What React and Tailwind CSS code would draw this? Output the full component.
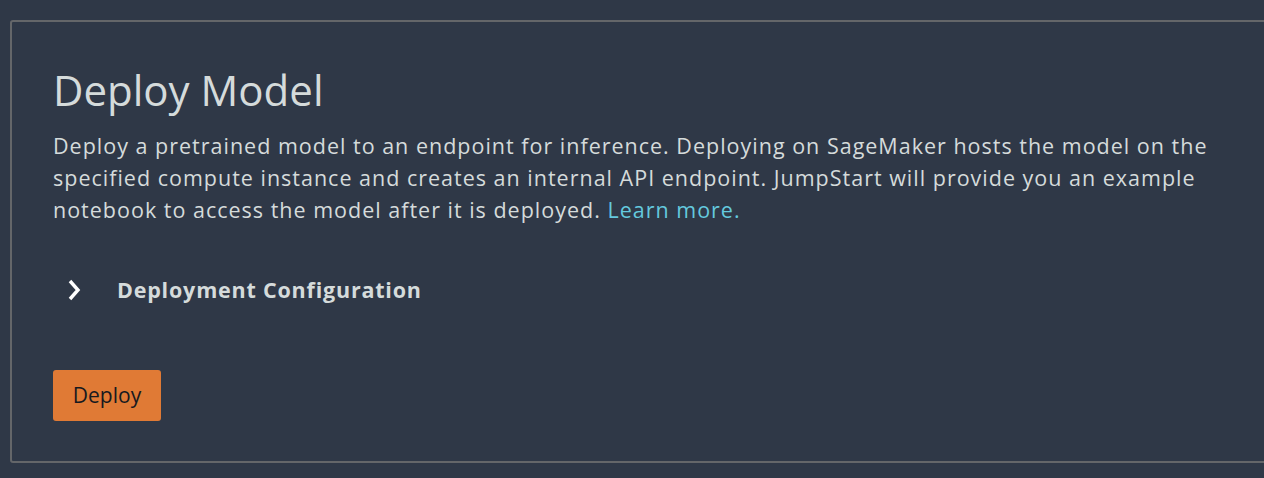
export default function App() {
  return (
    <div
      className="h-[478px] w-full overflow-hidden bg-[#2f3847] pt-[20px] pl-[10px]"
      style={{ fontFamily: '"Open Sans", "Noto Sans", sans-serif' }}
    >
      <div className="h-[443px] w-[1300px] rounded-[3px] border-2 border-[#646669] pl-[41px] pt-[43px]">
        <h1 className="text-[42px] leading-[50px] text-[#d5dbdb]">Deploy Model</h1>
        <p className="mt-[15px] w-[1200px] text-[21.5px] leading-[32px] tracking-[1px] text-[#d5dbdb]">
          Deploy a pretrained model to an endpoint for inference. Deploying on SageMaker hosts the model on the
          specified compute instance and creates an internal API endpoint. JumpStart will provide you an example
          notebook to access the model after it is deployed.{' '}
          <a className="text-[#64c9de]">Learn more.</a>
        </p>

        {/* Раскрывающийся блок настроек */}
        <div className="mt-[48px] flex items-center">
          <svg width="34" height="24" viewBox="0 0 34 24" className="ml-[12px] shrink-0">
            <polyline
              points="5,3 13,12 5,21"
              fill="none"
              stroke="#ffffff"
              strokeWidth="3.4"
            />
          </svg>
          <span className="ml-[18px] text-[21.5px] font-bold leading-[32px] tracking-[0.8px] text-[#d5dbdb]">
            Deployment Configuration
          </span>
        </div>

        <button className="mt-[64px] h-[51px] w-[108px] rounded-[3px] bg-[#e07a35] text-[21px] text-[#16191f]">
          Deploy
        </button>
      </div>
    </div>
  )
}
